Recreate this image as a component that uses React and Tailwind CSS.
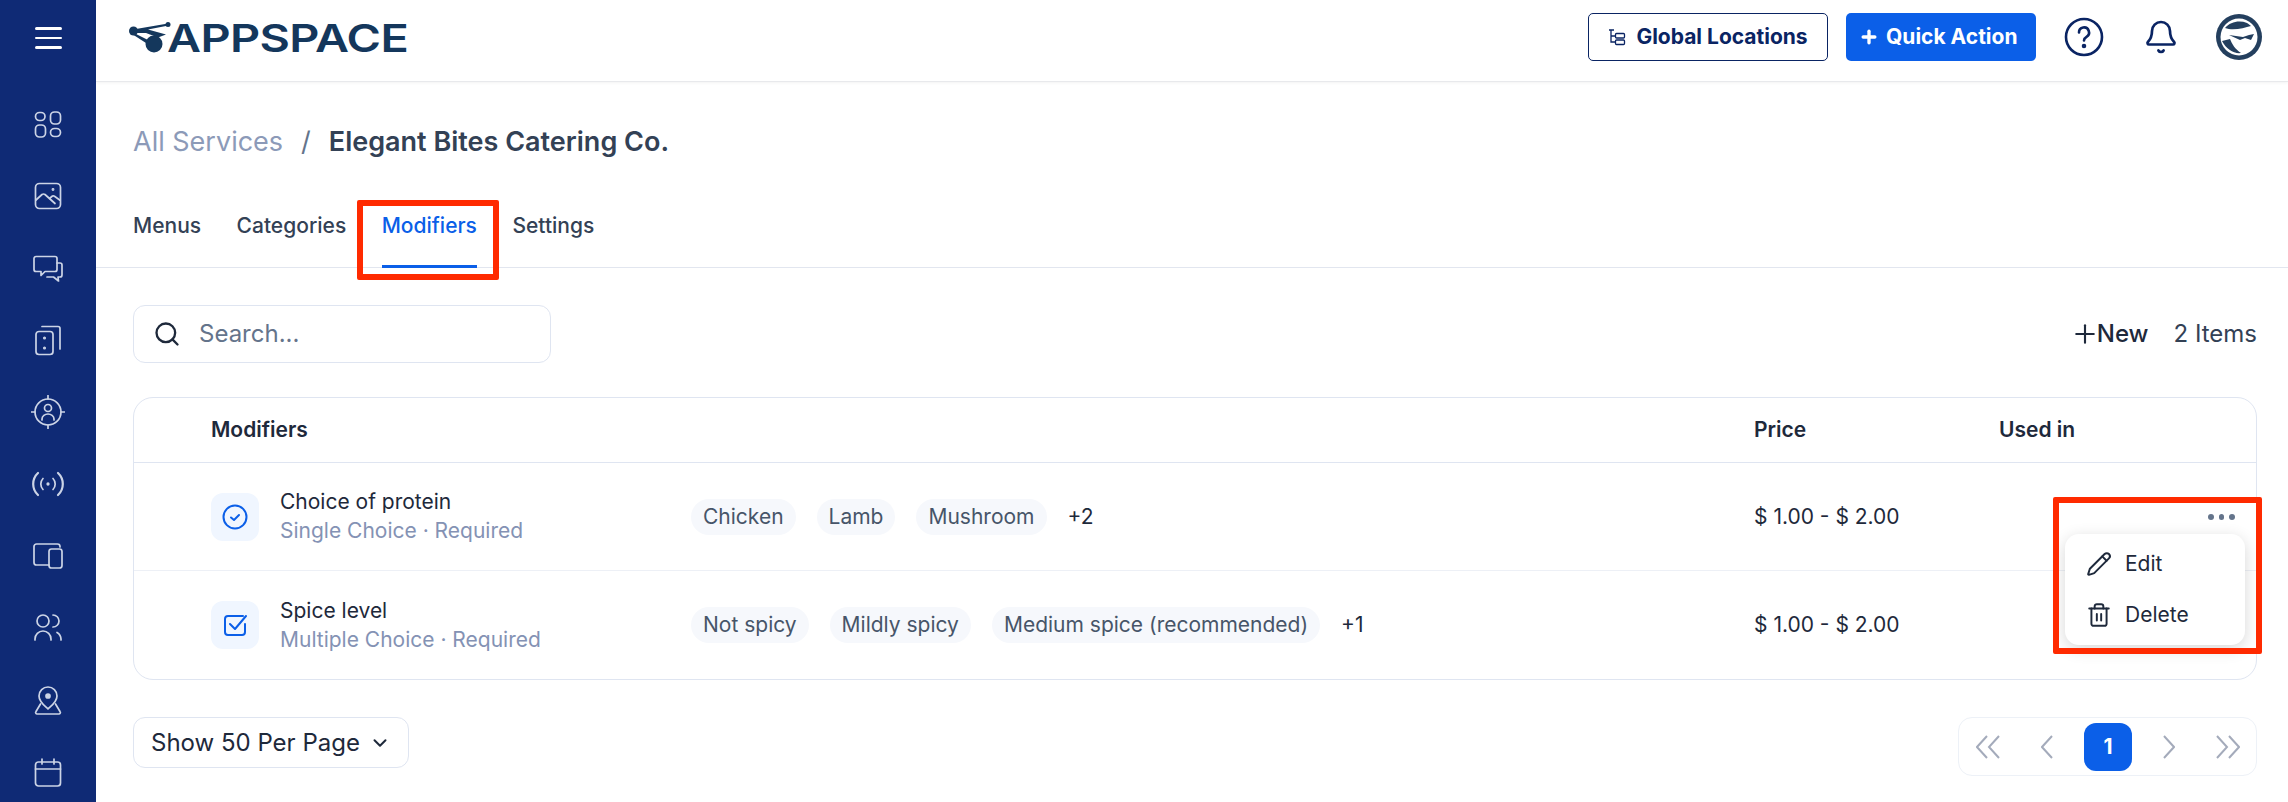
import { Bell, ChevronDown, Pencil, Plus, Search, Trash2 } from "lucide-react"

const NavIcon = ({ children }) => (
  <div className="flex h-[72px] shrink-0 items-center justify-center">
    <svg width="34" height="34" viewBox="-1 -1 34 34" fill="none" stroke="#ccd4e6" strokeWidth="1.7" strokeLinecap="round" strokeLinejoin="round">
      {children}
    </svg>
  </div>
)

const navIcons = [
  <>
    <rect x="3.5" y="4.5" width="9.5" height="8" rx="4" />
    <rect x="18.5" y="4" width="10" height="12" rx="4" />
    <rect x="3.5" y="17" width="10" height="12" rx="4" />
    <rect x="18.5" y="20.5" width="10" height="8" rx="4" />
  </>,
  <>
    <rect x="3.5" y="3.5" width="25" height="25" rx="4" />
    <path d="M4 20l6-5.5q1.5-1 3 0l10 9" />
    <path d="M18 18l2.5-2q1-.5 2 .2l5.5 4" />
    <circle cx="21" cy="9.5" r=".6" />
  </>,
  <>
    <path d="M4 4.5h19a2 2 0 0 1 2 2v11a2 2 0 0 1-2 2H13l-4 4v-4H4a2 2 0 0 1-2-2v-11a2 2 0 0 1 2-2z" />
    <path d="M25 11h3a2 2 0 0 1 2 2v10a2 2 0 0 1-2 2h-2l.5 4-5-4H15" />
  </>,
  <>
    <rect x="4" y="7.5" width="17" height="23" rx="3" />
    <path d="M10 2.5h16a2 2 0 0 1 2 2V25" />
    <circle cx="12.5" cy="14" r=".7" />
    <circle cx="12.5" cy="24" r=".7" />
  </>,
  <>
    <circle cx="16" cy="16" r="13" />
    <path d="M16 -.5v3.500M16 29v3.500M-.5 16H3M29 16h3.500" />
    <circle cx="16" cy="12" r="3.5" />
    <path d="M10 24v-1c0-3 3-5 6-5s6 2 6 5v1" />
  </>,
  <>
    <path d="M6 5a15 15 0 0 0 0 22M26 5a15 15 0 0 1 0 22" strokeWidth="2.2" />
    <path d="M11 10.500a8 8 0 0 0 0 11M21 10.500a8 8 0 0 1 0 11" />
    <circle cx="16" cy="16" r=".8" fill="#ccd4e6" />
  </>,
  <>
    <path d="M28 7V6.5a2.5 2.5 0 0 0-2.500-2.500h-21A2.5 2.5 0 0 0 2 6.5v16A2.5 2.5 0 0 0 4.500 25H17" />
    <rect x="17" y="9" width="13" height="19" rx="2.5" />
  </>,
  <>
    <circle cx="11" cy="9" r="6" />
    <path d="M3 28v-1a8 8 0 0 1 16 0v1" />
    <path d="M21 3a6 6 0 0 1 0 12" />
    <path d="M25 20.5a8 8 0 0 1 4 6.500v1" />
  </>,
  <>
    <path d="M16 25c-3-3-9-7-9-13a9 9 0 0 1 18 0c0 6-6 10-9 13z" />
    <circle cx="16" cy="12" r="2" fill="#ccd4e6" />
    <path d="M8.500 20L4 27.500a1.500 1.500 0 0 0 1.300 2.500h21.400a1.500 1.500 0 0 0 1.300-2.500L23.500 20" />
  </>,
  <>
    <rect x="3.5" y="6" width="25" height="24" rx="3" />
    <path d="M3.5 13h25M10 3v5M22 3v5" />
  </>,
]

const Sidebar = () => (
  <aside className="flex h-full w-[96px] shrink-0 flex-col overflow-hidden bg-[#0f2a75]">
    <div className="flex h-[88px] shrink-0 items-start justify-center pt-[27px]">
      <div className="flex w-[27px] flex-col gap-[7px]">
        <span className="h-[2.5px] rounded bg-white" />
        <span className="h-[2.5px] rounded bg-white" />
        <span className="h-[2.5px] rounded bg-white" />
      </div>
    </div>
    {navIcons.map((icon, i) => (
      <NavIcon key={i}>{icon}</NavIcon>
    ))}
  </aside>
)

const Logo = () => (
  <div className="mt-[3px] flex items-center">
    <svg width="44" height="34" viewBox="0 0 44 34" fill="#14375c" className="shrink-0">
      <circle cx="5.5" cy="10" r="4.5" />
      <circle cx="40" cy="3.5" r="2.5" />
      <circle cx="26" cy="23" r="8.5" />
      <path d="M5 8.500L40 2.500l.5 2L20 8.500l18 5-8 3L18 12 6 12z" />
      <path d="M4 11l16 8-2 3L4 13z" />
    </svg>
    <span className="-ml-[5px] origin-left scale-x-[1.23] text-[38px] leading-none font-semibold tracking-[-0.5px] text-[#14375c]">APPSPACE</span>
  </div>
)

const Header = () => (
  <header className="flex h-[82px] shrink-0 items-center justify-between border-b border-[#e8e9ec] pr-[26px] pb-[8px] pl-[32px] shadow-[0_1px_3px_rgba(0,0,0,0.05)]">
    <Logo />
    <div className="flex items-center">
      <button className="flex h-[48px] w-[240px] items-center justify-center gap-[10px] rounded-[5px] border border-[#0a2463] text-[21px] font-bold text-[#0a2463]">
        <svg width="18" height="18" viewBox="0 0 18 18" fill="none" stroke="#0a2463" strokeWidth="1.3">
          <path d="M1 2h5M3 2v12h4M3 8h4" />
          <rect x="7.5" y="5.5" width="9" height="4.5" rx="1" />
          <rect x="7.5" y="12" width="9" height="4.5" rx="1" />
        </svg>
        Global Locations
      </button>
      <button className="ml-[18px] flex h-[48px] w-[190px] items-center gap-[7px] rounded-[5px] bg-[#0b5fe8] pl-[13px] text-[21px] font-bold text-white">
        <Plus size={20} strokeWidth={4} />
        Quick Action
      </button>
      <svg width="40" height="40" viewBox="0 0 40 40" fill="none" stroke="#0a2463" strokeWidth="2.6" strokeLinecap="round" className="ml-[28px]">
        <circle cx="20" cy="20" r="18" />
        <path d="M15 15.5a5 5 0 1 1 7.500 4.300c-1.700 1-2.500 2-2.500 3.700" />
        <circle cx="20" cy="29" r="1" fill="#0a2463" />
      </svg>
      <Bell size={36} strokeWidth={1.8} color="#0a2463" className="ml-[39px]" />
      <svg width="46" height="46" viewBox="0 0 46 46" className="ml-[37px]">
        <circle cx="23" cy="23" r="23" fill="#243f5e" />
        <circle cx="23" cy="23" r="18.5" fill="#fff" />
        <path d="M9 14c5-6 14-8 22-5 2 1 4 3 4 3-7 2-18 5-26 2z" fill="#243f5e" />
        <path d="M13 21l14 2 6-2 5-1-3 6-6-2-5 2z" fill="#243f5e" />
        <path d="M6 27l8-2c2 5 5 10 11 14-7 1-15-4-19-12z" fill="#243f5e" />
      </svg>
    </div>
  </header>
)

const Tabs = () => (
  <div className="flex h-[68px] shrink-0 gap-[35.5px] border-b border-[#e2e6ef] pl-[37px] text-[21px] font-medium text-[#334155]">
    <span className="pt-[12px] leading-[28px]">Menus</span>
    <span className="pt-[12px] leading-[28px]">Categories</span>
    <span className="h-[68px] border-b-[3px] border-[#0b5fe8] pt-[12px] leading-[28px] text-[#0b5fe8]">Modifiers</span>
    <span className="pt-[12px] leading-[28px]">Settings</span>
  </div>
)

const rows = [
  {
    title: "Choice of protein",
    sub: "Single Choice · Required",
    pills: ["Chicken", "Lamb", "Mushroom"],
    more: "+2",
    icon: (
      <svg width="26" height="26" viewBox="0 0 26 26" fill="none" stroke="#0b5fe8" strokeWidth="2" strokeLinecap="round" strokeLinejoin="round">
        <circle cx="13" cy="13" r="11.5" />
        <path d="M9 13.5l3 2.500 5-5" />
      </svg>
    ),
  },
  {
    title: "Spice level",
    sub: "Multiple Choice · Required",
    pills: ["Not spicy", "Mildly spicy", "Medium spice (recommended)"],
    more: "+1",
    icon: (
      <svg width="24" height="24" viewBox="0 0 24 24" fill="none" stroke="#0b5fe8" strokeWidth="2" strokeLinecap="round" strokeLinejoin="round">
        <path d="M20 3H5a3 3 0 0 0-3 3v13a3 3 0 0 0 3 3h14a3 3 0 0 0 3-3v-8" />
        <path d="M7 11l5 5L23 3" />
      </svg>
    ),
  },
]

const Row = ({ row, last }) => (
  <div className={`flex items-center pl-[77px] ${last ? "h-[108px]" : "h-[108px] border-b border-[#edf0f6]"}`}>
    <div className="flex w-[480px] shrink-0 items-center gap-[21px]">
      <div className="flex size-[48px] items-center justify-center rounded-[12px] bg-[#f0f6ff]">{row.icon}</div>
      <div className="-mt-[1px] text-[21px] leading-[29px]">
        <div className="text-[#1e293b]">{row.title}</div>
        <div className="text-[#8492b4]">{row.sub}</div>
      </div>
    </div>
    <div className="flex w-[1063px] shrink-0 items-center gap-[21px]">
      {row.pills.map((p) => (
        <span key={p} className="flex h-[36px] items-center rounded-full bg-[#f6f8fc] px-[12px] text-[21px] text-[#475569]">
          {p}
        </span>
      ))}
      <span className="text-[21px] text-[#1e293b]">{row.more}</span>
    </div>
    <div className="text-[21px] text-[#1e293b]">$ 1.00 - $ 2.00</div>
  </div>
)

const Pager = () => (
  <div className="flex h-[59px] w-[299px] items-center rounded-[14px] border border-[#edf1f7] pl-[17px]">
    <svg width="24" height="24" viewBox="0 0 24 24" fill="none" stroke="#a4abbb" strokeWidth="2">
      <path d="M11 1L1 12l10 11M23 1L13 12l10 11" />
    </svg>
    <svg width="12" height="24" viewBox="0 0 12 24" fill="none" stroke="#a4abbb" strokeWidth="2" className="ml-[41px]">
      <path d="M11 1L1 12l10 11" />
    </svg>
    <span className="ml-[31px] flex size-[48px] items-center justify-center rounded-[12px] bg-[#0b5fe8] text-[21px] font-bold text-white">1</span>
    <svg width="12" height="24" viewBox="0 0 12 24" fill="none" stroke="#a4abbb" strokeWidth="2" className="ml-[31px]">
      <path d="M1 1l10 11L1 23" />
    </svg>
    <svg width="24" height="24" viewBox="0 0 24 24" fill="none" stroke="#a4abbb" strokeWidth="2" className="ml-[41px]">
      <path d="M1 1l10 11L1 23M13 1l10 11-10 11" />
    </svg>
  </div>
)

export default function App() {
  return (
    <div className="relative flex h-[802px] w-[2288px] overflow-hidden bg-white font-[Inter,sans-serif]">
      <Sidebar />
      <main className="flex min-w-0 flex-1 flex-col">
        <Header />

        {/* Breadcrumb */}
        <div className="flex h-[118px] shrink-0 items-center pt-[2px] pl-[37px] text-[27px]">
          <span className="text-[#8c9ab8]">All Services</span>
          <span className="mx-[18px] text-[#64748b]">/</span>
          <span className="font-semibold text-[#334155]">Elegant Bites Catering Co.</span>
        </div>

        <Tabs />

        <div className="flex flex-col pt-[37px] pr-[31px] pl-[37px]">
          {/* Toolbar */}
          <div className="flex h-[58px] items-center justify-between">
            <div className="flex h-[58px] w-[418px] items-center gap-[18px] rounded-[12px] border border-[#dfe5f1] pl-[19px]">
              <Search size={28} strokeWidth={2} color="#1e293b" />
              <span className="text-[24px] text-[#64748b]">Search...</span>
            </div>
            <div className="flex items-center text-[24px] text-[#1e293b]">
              <Plus size={30} strokeWidth={1.7} />
              <span className="ml-[-3px] font-medium">New</span>
              <span className="ml-[25px] text-[#334155]">2 Items</span>
            </div>
          </div>

          {/* Table */}
          <div className="mt-[34px] h-[283px] rounded-[20px] border border-[#dfe5f1]">
            <div className="flex h-[65px] items-center border-b border-[#dfe5f1] pl-[77px] text-[21px] font-semibold text-[#1e293b]">
              <span className="w-[1543px]">Modifiers</span>
              <span className="w-[245px]">Price</span>
              <span>Used in</span>
            </div>
            {rows.map((row, i) => (
              <Row key={row.title} row={row} last={i === rows.length - 1} />
            ))}
          </div>

          {/* Footer */}
          <div className="mt-[37px] flex items-start justify-between">
            <div className="flex h-[51px] w-[276px] items-center gap-[9px] rounded-[12px] border border-[#dfe5f1] pl-[17px] text-[24px] text-[#1e293b]">
              Show 50 Per Page
              <ChevronDown size={22} strokeWidth={2.2} />
            </div>
            <Pager />
          </div>
        </div>
      </main>

      {/* Row actions menu */}
      <div className="absolute top-[514px] left-[2208px] flex gap-[5px]">
        <span className="size-[5.5px] rounded-full bg-[#64748b]" />
        <span className="size-[5.5px] rounded-full bg-[#64748b]" />
        <span className="size-[5.5px] rounded-full bg-[#64748b]" />
      </div>
      <div className="absolute top-[534px] left-[2065px] flex h-[111px] w-[180px] flex-col justify-center rounded-[14px] bg-white pl-[21px] text-[21px] text-[#1e293b] shadow-[0_4px_16px_rgba(0,0,0,0.16)]">
        <div className="flex h-[51px] items-center gap-[13px]">
          <Pencil size={26} strokeWidth={1.8} />
          Edit
        </div>
        <div className="flex h-[51px] items-center gap-[13px]">
          <Trash2 size={26} strokeWidth={1.8} />
          Delete
        </div>
      </div>

      {/* Red annotations */}
      <div className="absolute top-[200px] left-[357px] h-[80px] w-[142px] rounded-[2px] border-[6px] border-[#ff2a00]" />
      <div className="absolute top-[497px] left-[2053px] h-[157px] w-[209px] rounded-[2px] border-[6px] border-[#ff2a00]" />
    </div>
  )
}
